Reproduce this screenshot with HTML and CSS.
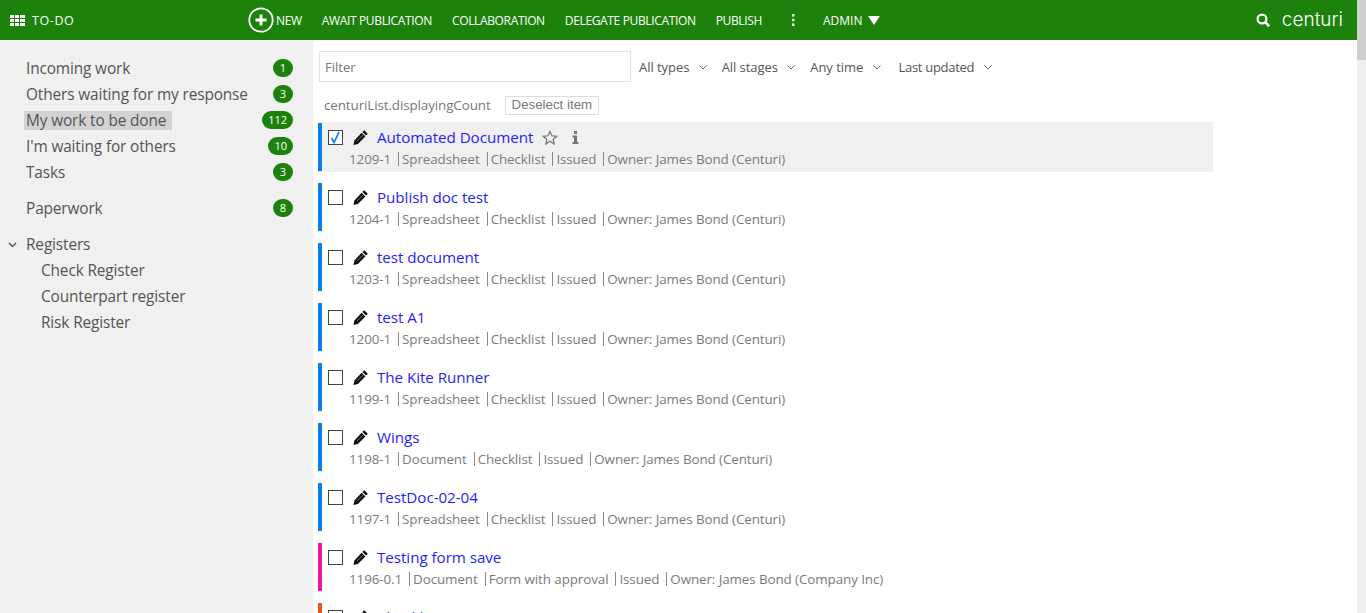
FILE: index.html
```html
<!DOCTYPE html>
<html lang="en">
<head>
    <meta charset="UTF-8">
    <meta name="viewport" content="width=device-width, initial-scale=1.0">
    <title>To-do</title>
    <link rel="stylesheet" href="styles.css">
</head>
<body>
<svg class="defs" width="0" height="0">
    <symbol id="pencil" viewBox="0 0 15 15">
        <path fill="#111" d="M11.200.2l3.600 3.600-1.800 1.800-3.600-3.600zM8.600 2.700l3.800 3.800-7.500 7.500-4.500 1 1-4.500z"/>
        <path fill="none" stroke="#999" stroke-width=".7" d="M9.800 5.200l-6 6"/>
    </symbol>
    <symbol id="chevron" viewBox="0 0 8 5">
        <path fill="none" stroke="#666" d="M.5.5L4 4 7.500.5"/>
    </symbol>
</svg>
<div class="page">
    <div class="content">
        <header class="topbar">
            <div class="brand">
                <svg class="grid-icon" width="15" height="11" viewBox="0 0 15 11"><path fill="#fff" d="M0 0h4v3H0zM5 0h4v3H5zM10 0h5v3h-5zM0 4h4v3H0zM5 4h4v3H5zM10 4h5v3h-5zM0 8h4v3H0zM5 8h4v3H5zM10 8h5v3h-5z"/></svg>
                <span>TO-DO</span>
            </div>
            <nav class="menu">
                <a class="menu-new">
                    <svg width="26" height="26" viewBox="0 0 26 26"><circle cx="13" cy="13" r="11.700" fill="none" stroke="#fff" stroke-width="1.800"/><path fill="#fff" d="M11.600 7.500h2.800v4.100h4.100v2.800h-4.100v4.100h-2.800v-4.100H7.500v-2.800h4.100z"/></svg>
                    NEW
                </a>
                <a>AWAIT PUBLICATION</a>
                <a>COLLABORATION</a>
                <a>DELEGATE PUBLICATION</a>
                <a>PUBLISH</a>
                <a class="menu-dots"><svg width="4" height="12" viewBox="0 0 4 12"><path fill="#fff" d="M1 0h2.400v2.400H1zM1 4.800h2.400v2.400H1zM1 9.600h2.400V12H1z"/></svg></a>
                <a class="menu-admin">ADMIN <svg width="12" height="9" viewBox="0 0 12 9"><path fill="#fff" d="M0 0h12L6 9z"/></svg></a>
            </nav>
            <div class="topbar-right">
                <svg width="14" height="14" viewBox="0 0 14 14"><circle cx="6" cy="6" r="4.400" fill="none" stroke="#fff" stroke-width="2.200"/><path stroke="#fff" stroke-width="2.600" d="M9.200 9.200l4 4"/></svg>
                <span class="logo">centuri</span>
            </div>
        </header>

        <div class="layout">
            <aside class="sidebar">
                <ul class="side-list">
                    <li><span class="side-label">Incoming work</span><span class="count">1</span></li>
                    <li><span class="side-label">Others waiting for my response</span><span class="count">3</span></li>
                    <li><span class="side-label active">My work to be done</span><span class="count">112</span></li>
                    <li><span class="side-label">I'm waiting for others</span><span class="count">10</span></li>
                    <li><span class="side-label">Tasks</span><span class="count">3</span></li>
                </ul>
                <ul class="side-list side-gap">
                    <li><span class="side-label">Paperwork</span><span class="count">8</span></li>
                </ul>
                <ul class="side-list side-gap">
                    <li>
                        <svg class="side-chevron" width="9" height="6" viewBox="0 0 9 6"><path fill="none" stroke="#555" stroke-width="1.500" d="M1 1l3.500 3.500L8 1"/></svg>
                        <span class="side-label">Registers</span>
                    </li>
                    <li class="side-sub"><span class="side-label">Check Register</span></li>
                    <li class="side-sub"><span class="side-label">Counterpart register</span></li>
                    <li class="side-sub"><span class="side-label">Risk Register</span></li>
                </ul>
            </aside>

            <main class="main">
                <div class="filters">
                    <input class="filter-input" type="text" placeholder="Filter">
                    <span class="filter">All types <svg width="8" height="5"><use href="#chevron"/></svg></span>
                    <span class="filter">All stages <svg width="8" height="5"><use href="#chevron"/></svg></span>
                    <span class="filter">Any time <svg width="8" height="5"><use href="#chevron"/></svg></span>
                    <span class="filter filter-sort">Last updated <svg width="8" height="5"><use href="#chevron"/></svg></span>
                </div>
                <div class="list-info">
                    <span>centuriList.displayingCount</span>
                    <button class="deselect">Deselect item</button>
                </div>

                <div class="doc selected">
                    <div class="doc-title">
                        <span class="check checked"><svg width="13" height="13" viewBox="0 0 13 13"><path fill="none" stroke="#0d7ef0" stroke-width="1.700" d="M2.500 7l2.600 4.500L10 .8"/></svg></span>
                        <svg class="pencil" width="15" height="15"><use href="#pencil"/></svg>
                        <a>Automated Document</a>
                        <svg class="star" width="16" height="15" viewBox="0 0 16 15"><path fill="none" stroke="#777" stroke-width="1.200" d="M8 1.400l2 4.400 4.700.5-3.500 3.200 1 4.600L8 11.300l-4.200 2.800 1-4.600-3.500-3.200 4.700-.5z"/></svg>
                        <svg class="info" width="7" height="13" viewBox="0 0 7 13"><path fill="#777" d="M2 0h3v3H2zM.5 4.500H5V11h1.500v2H.5v-2H2V6.500H.5z"/></svg>
                    </div>
                    <div class="doc-meta"><span>1209-1</span><span>Spreadsheet</span><span>Checklist</span><span>Issued</span><span>Owner: James Bond (Centuri)</span></div>
                </div>

                <div class="doc">
                    <div class="doc-title">
                        <span class="check"></span>
                        <svg class="pencil" width="15" height="15"><use href="#pencil"/></svg>
                        <a>Publish doc test</a>
                    </div>
                    <div class="doc-meta"><span>1204-1</span><span>Spreadsheet</span><span>Checklist</span><span>Issued</span><span>Owner: James Bond (Centuri)</span></div>
                </div>

                <div class="doc">
                    <div class="doc-title">
                        <span class="check"></span>
                        <svg class="pencil" width="15" height="15"><use href="#pencil"/></svg>
                        <a>test document</a>
                    </div>
                    <div class="doc-meta"><span>1203-1</span><span>Spreadsheet</span><span>Checklist</span><span>Issued</span><span>Owner: James Bond (Centuri)</span></div>
                </div>

                <div class="doc">
                    <div class="doc-title">
                        <span class="check"></span>
                        <svg class="pencil" width="15" height="15"><use href="#pencil"/></svg>
                        <a>test A1</a>
                    </div>
                    <div class="doc-meta"><span>1200-1</span><span>Spreadsheet</span><span>Checklist</span><span>Issued</span><span>Owner: James Bond (Centuri)</span></div>
                </div>

                <div class="doc">
                    <div class="doc-title">
                        <span class="check"></span>
                        <svg class="pencil" width="15" height="15"><use href="#pencil"/></svg>
                        <a>The Kite Runner</a>
                    </div>
                    <div class="doc-meta"><span>1199-1</span><span>Spreadsheet</span><span>Checklist</span><span>Issued</span><span>Owner: James Bond (Centuri)</span></div>
                </div>

                <div class="doc">
                    <div class="doc-title">
                        <span class="check"></span>
                        <svg class="pencil" width="15" height="15"><use href="#pencil"/></svg>
                        <a>Wings</a>
                    </div>
                    <div class="doc-meta"><span>1198-1</span><span>Document</span><span>Checklist</span><span>Issued</span><span>Owner: James Bond (Centuri)</span></div>
                </div>

                <div class="doc">
                    <div class="doc-title">
                        <span class="check"></span>
                        <svg class="pencil" width="15" height="15"><use href="#pencil"/></svg>
                        <a>TestDoc-02-04</a>
                    </div>
                    <div class="doc-meta"><span>1197-1</span><span>Spreadsheet</span><span>Checklist</span><span>Issued</span><span>Owner: James Bond (Centuri)</span></div>
                </div>

                <div class="doc doc-pink">
                    <div class="doc-title">
                        <span class="check"></span>
                        <svg class="pencil" width="15" height="15"><use href="#pencil"/></svg>
                        <a>Testing form save</a>
                    </div>
                    <div class="doc-meta"><span>1196-0.1</span><span>Document</span><span>Form with approval</span><span>Issued</span><span>Owner: James Bond (Company Inc)</span></div>
                </div>

                <div class="doc doc-orange">
                    <div class="doc-title">
                        <span class="check"></span>
                        <svg class="pencil" width="15" height="15"><use href="#pencil"/></svg>
                        <a>Checklist 2</a>
                    </div>
                </div>
            </main>
        </div>
    </div>
    <div class="scrollbar"><div class="scrollbar-thumb"></div></div>
</div>
</body>
</html>
```

FILE: styles.css
```css
* {
    box-sizing: border-box;
}
html, body {
    margin: 0;
    height: 100%;
    overflow: hidden;
}
body {
    font-family: "Open Sans", "Noto Sans", sans-serif;
    background-color: #fff;
    color: #555;
}
.defs {
    display: block;
    height: 0;
}
.page {
    display: flex;
    height: 613px;
}
.content {
    flex: 1;
    min-width: 0;
    display: flex;
    flex-direction: column;
}
.scrollbar {
    width: 9px;
    background-color: #eee;
}
.scrollbar-thumb {
    height: 60px;
    background-color: #cfcfcf;
}

/* top bar */
.topbar {
    flex: none;
    height: 40px;
    display: flex;
    align-items: center;
    background-color: #1c820c;
    color: #fff;
    font-size: 12px;
    padding-left: 10px;
}
.brand {
    width: 238px;
    display: flex;
    align-items: center;
    gap: 7px;
    font-size: 12.500px;
    letter-spacing: 0.6px;
}
.menu {
    display: flex;
    align-items: center;
    gap: 20px;
    letter-spacing: -0.35px;
}
.menu-new {
    display: flex;
    align-items: center;
    gap: 2px;
}
.menu-dots {
    display: flex;
    margin: 0 8px 0 9px;
}
.menu-admin {
    letter-spacing: 0;
}
.menu-admin svg {
    margin-left: 2px;
}
.topbar-right {
    margin-left: auto;
    display: flex;
    align-items: center;
    gap: 12px;
    padding-right: 14px;
}
.logo {
    font-family: Inter, sans-serif;
    font-weight: 300;
    font-size: 19px;
    line-height: 20px;
}

/* sidebar */
.layout {
    flex: 1;
    display: flex;
    min-height: 0;
}
.sidebar {
    flex: none;
    width: 313px;
    background-color: #f0f0f0;
    padding: 15px 20px 0 0;
    font-size: 15.400px;
}
.side-list {
    list-style: none;
    margin: 0;
    padding: 0;
}
.side-gap {
    margin-top: 10px;
}
.side-list li {
    position: relative;
    height: 26px;
    padding-left: 24px;
    display: flex;
    align-items: center;
    justify-content: space-between;
    letter-spacing: -0.13px;
}
.side-list .side-sub {
    padding-left: 39px;
}
.side-label {
    padding: 0 6px 0 2px;
    line-height: 19px;
}
.active {
    background-color: #d2d2d2;
}
.side-chevron {
    position: absolute;
    left: 8px;
    top: 11px;
}
.count {
    min-width: 20px;
    height: 18px;
    padding: 0 6px;
    border-radius: 9px;
    background-color: #1c820c;
    color: #fff;
    font-size: 11px;
    line-height: 18px;
    text-align: center;
    letter-spacing: 0;
}

/* main list */
.main {
    flex: 1;
    min-width: 0;
    overflow: hidden;
    padding: 11px 0 0 5px;
}
.filters {
    display: flex;
    align-items: center;
    height: 31px;
    font-size: 13px;
    padding-left: 1px;
}
.filter-input {
    width: 312px;
    height: 31px;
    margin-right: 8px;
    padding: 1px 5px 0;
    border: 1px solid #e2e2e2;
    font-family: inherit;
    font-size: 13px;
    outline: none;
}
.filter-input::placeholder {
    color: #757575;
}
.filter {
    margin: 1px 15px 0 0;
    letter-spacing: -0.05px;
}
.filter svg {
    margin: 0 0 2px 6px;
}
.filter-sort {
    margin-left: 3px;
    letter-spacing: -0.3px;
}
.filter-sort svg {
    margin-left: 7px;
}
.list-info {
    display: flex;
    align-items: center;
    gap: 14px;
    height: 20px;
    margin: 13px 0 7px;
    padding-left: 6px;
    font-size: 13.400px;
    color: #777;
    letter-spacing: -0.1px;
}
.deselect {
    height: 19px;
    padding: 0 6px;
    border: 1px solid #ddd;
    background-color: #fff;
    color: #777;
    font-family: "Liberation Sans", sans-serif;
    font-size: 13.300px;
    line-height: 16px;
}
.doc {
    width: 895px;
    height: 50px;
    margin-bottom: 10px;
    padding: 4px 0 0 10px;
    position: relative;
}
.doc::before {
    content: "";
    position: absolute;
    left: 0;
    top: 1px;
    bottom: 1px;
    width: 4px;
    background-color: #0d7ef0;
}
.doc-pink::before {
    background-color: #ee149c;
}
.doc-orange::before {
    background-color: #ee5414;
}
.selected {
    background-color: #f0f0f0;
}
.doc-title {
    display: flex;
    align-items: center;
    height: 22px;
    font-size: 15.200px;
}
.doc-title a {
    color: #1f1ff5;
    letter-spacing: -0.05px;
}
.check {
    width: 15px;
    height: 15px;
    border: 1px solid #444;
    background-color: #fff;
    margin-right: 10px;
    display: flex;
    align-items: center;
    justify-content: center;
}
.pencil {
    margin-right: 9px;
}
.star {
    margin-left: 9px;
}
.info {
    margin-left: 14px;
}
.doc-meta {
    display: flex;
    margin-top: 1px;
    padding-left: 21px;
    font-size: 13.400px;
    color: #7a7a7a;
    height: 20px;
    align-items: center;
    letter-spacing: -0.09px;
}
.doc-meta span {
    line-height: 14px;
    padding-right: 7px;
}
.doc-meta span + span {
    border-left: 1px solid #888;
    padding-left: 3px;
}
```
